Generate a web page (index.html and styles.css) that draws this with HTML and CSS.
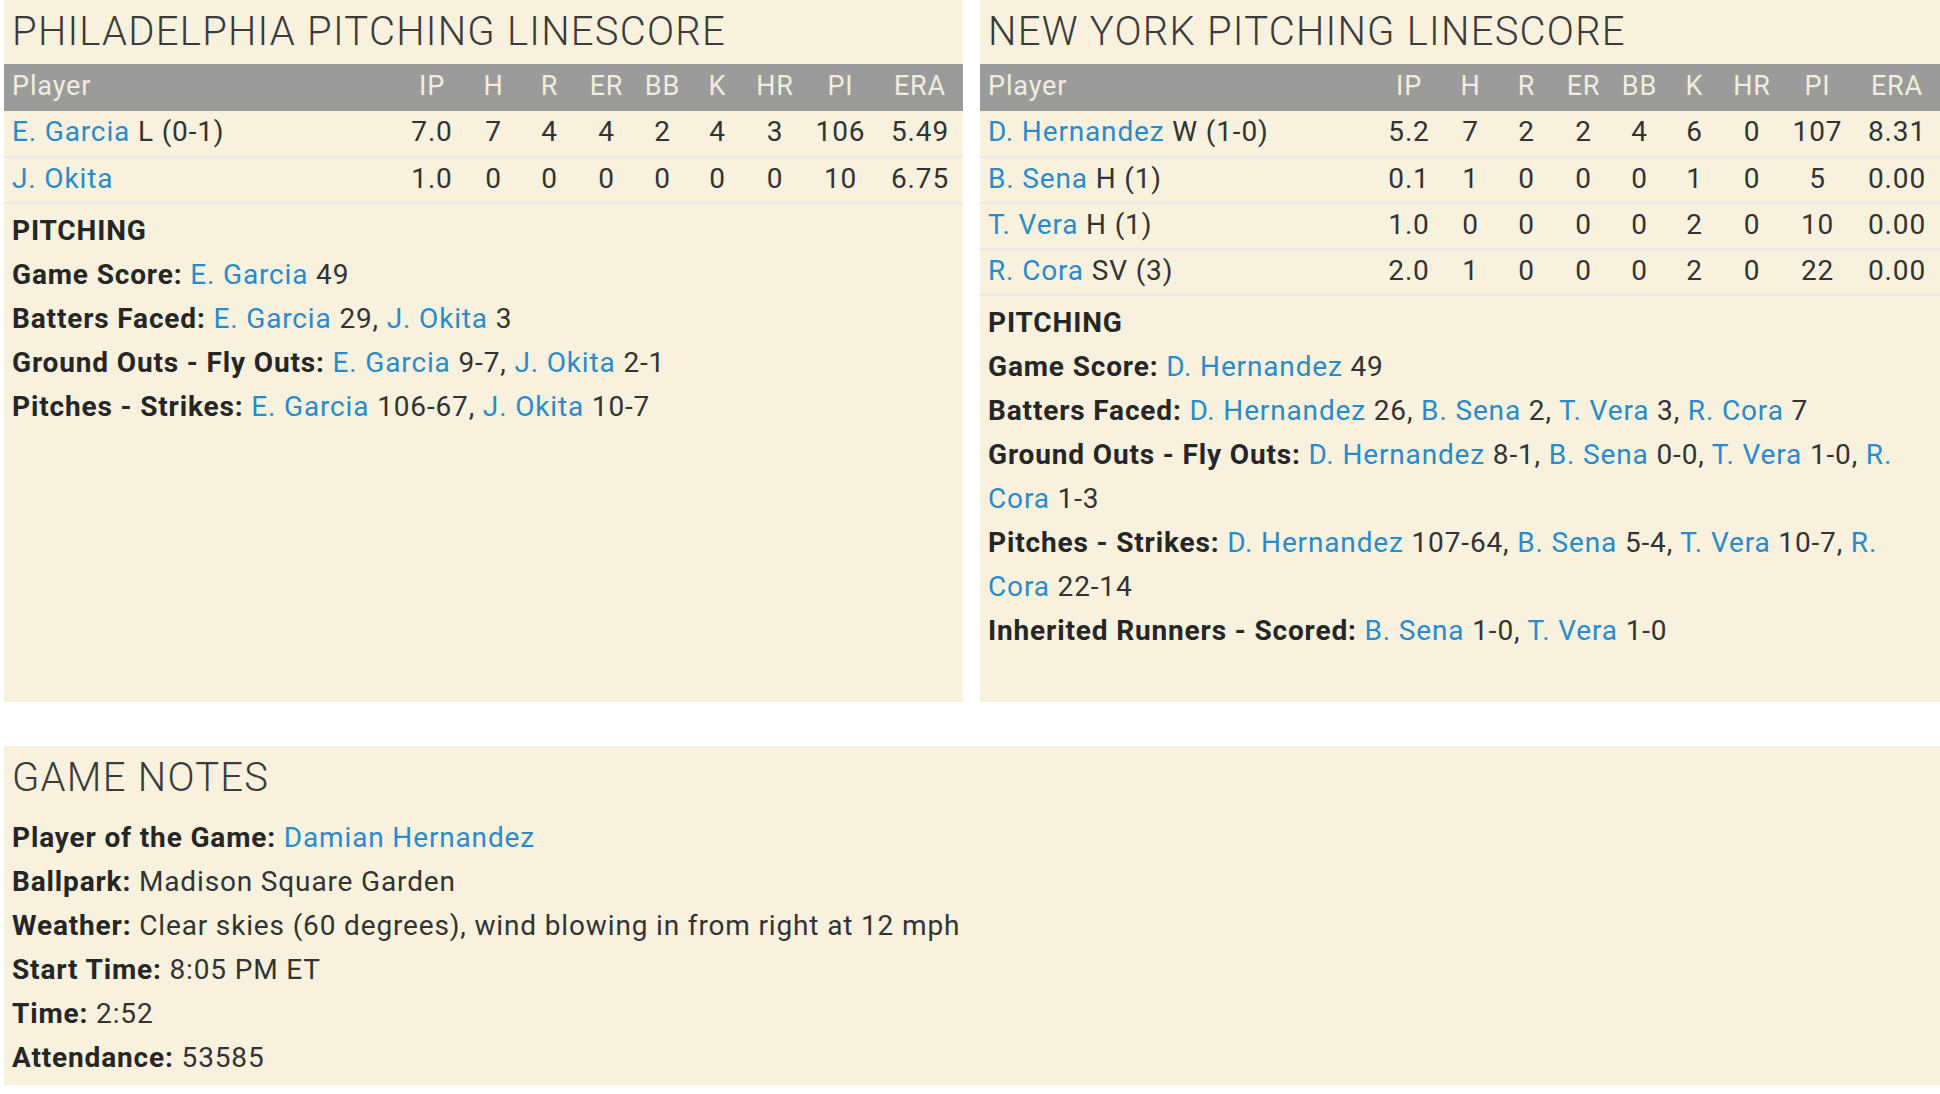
FILE: index.html
```html
<!DOCTYPE html>
<html lang="en">
<head>
<meta charset="utf-8">
<title>Pitching Linescore</title>
<link rel="stylesheet" href="styles.css">
</head>
<body>
<div class="page">
  <div class="top">
    <section class="panel panel-left">
      <h2 class="title">PHILADELPHIA PITCHING LINESCORE</h2>
      <table class="line">
        <colgroup>
          <col class="c-player"><col class="c-ip"><col class="c-h"><col class="c-r"><col class="c-er"><col class="c-bb"><col class="c-k"><col class="c-hr"><col class="c-pi"><col class="c-era">
        </colgroup>
        <thead>
          <tr><th class="pl">Player</th><th>IP</th><th>H</th><th>R</th><th>ER</th><th>BB</th><th>K</th><th>HR</th><th>PI</th><th>ERA</th></tr>
        </thead>
        <tbody>
          <tr><td class="pl"><a href="#">E. Garcia</a> L (0-1)</td><td>7.0</td><td>7</td><td>4</td><td>4</td><td>2</td><td>4</td><td>3</td><td>106</td><td>5.49</td></tr>
          <tr><td class="pl"><a href="#">J. Okita</a></td><td>1.0</td><td>0</td><td>0</td><td>0</td><td>0</td><td>0</td><td>0</td><td>10</td><td>6.75</td></tr>
        </tbody>
      </table>
      <div class="info">
        <div class="sub">PITCHING</div>
        <p><b>Game Score:</b> <a href="#">E. Garcia</a> 49</p>
        <p><b>Batters Faced:</b> <a href="#">E. Garcia</a> 29, <a href="#">J. Okita</a> 3</p>
        <p><b>Ground Outs - Fly Outs:</b> <a href="#">E. Garcia</a> 9-7, <a href="#">J. Okita</a> 2-1</p>
        <p><b>Pitches - Strikes:</b> <a href="#">E. Garcia</a> 106-67, <a href="#">J. Okita</a> 10-7</p>
      </div>
    </section>
    <section class="panel panel-right">
      <h2 class="title">NEW YORK PITCHING LINESCORE</h2>
      <table class="line">
        <colgroup>
          <col class="c-player"><col class="c-ip"><col class="c-h"><col class="c-r"><col class="c-er"><col class="c-bb"><col class="c-k"><col class="c-hr"><col class="c-pi"><col class="c-era">
        </colgroup>
        <thead>
          <tr><th class="pl">Player</th><th>IP</th><th>H</th><th>R</th><th>ER</th><th>BB</th><th>K</th><th>HR</th><th>PI</th><th>ERA</th></tr>
        </thead>
        <tbody>
          <tr><td class="pl"><a href="#">D. Hernandez</a> W (1-0)</td><td>5.2</td><td>7</td><td>2</td><td>2</td><td>4</td><td>6</td><td>0</td><td>107</td><td>8.31</td></tr>
          <tr><td class="pl"><a href="#">B. Sena</a> H (1)</td><td>0.1</td><td>1</td><td>0</td><td>0</td><td>0</td><td>1</td><td>0</td><td>5</td><td>0.00</td></tr>
          <tr><td class="pl"><a href="#">T. Vera</a> H (1)</td><td>1.0</td><td>0</td><td>0</td><td>0</td><td>0</td><td>2</td><td>0</td><td>10</td><td>0.00</td></tr>
          <tr><td class="pl"><a href="#">R. Cora</a> SV (3)</td><td>2.0</td><td>1</td><td>0</td><td>0</td><td>0</td><td>2</td><td>0</td><td>22</td><td>0.00</td></tr>
        </tbody>
      </table>
      <div class="info">
        <div class="sub">PITCHING</div>
        <p><b>Game Score:</b> <a href="#">D. Hernandez</a> 49</p>
        <p><b>Batters Faced:</b> <a href="#">D. Hernandez</a> 26, <a href="#">B. Sena</a> 2, <a href="#">T. Vera</a> 3, <a href="#">R. Cora</a> 7</p>
        <p><b>Ground Outs - Fly Outs:</b> <a href="#">D. Hernandez</a> 8-1, <a href="#">B. Sena</a> 0-0, <a href="#">T. Vera</a> 1-0, <a href="#"><span>R.</span> <span>Cora</span></a> <span>1-3</span></p>
        <p><b>Pitches - Strikes:</b> <a href="#">D. Hernandez</a> 107-64, <a href="#">B. Sena</a> 5-4, <a href="#">T. Vera</a> 10-7, <a href="#"><span>R.</span> <span>Cora</span></a> <span>22-14</span></p>
        <p><b>Inherited Runners - Scored:</b> <a href="#">B. Sena</a> 1-0, <a href="#">T. Vera</a> 1-0</p>
      </div>
    </section>
  </div>
  <section class="panel panel-notes">
    <h2 class="title">GAME NOTES</h2>
    <div class="info notes-info">
      <p><b>Player of the Game:</b> <a href="#">Damian Hernandez</a></p>
      <p><b>Ballpark:</b> Madison Square Garden</p>
      <p><b>Weather:</b> Clear skies (60 degrees), wind blowing in from right at 12 mph</p>
      <p><b>Start Time:</b> 8:05 PM ET</p>
      <p><b>Time:</b> 2:52</p>
      <p><b>Attendance:</b> 53585</p>
    </div>
  </section>
</div>
</body>
</html>
```

FILE: styles.css
```css
* { box-sizing: border-box; }

html, body {
  margin: 0;
  padding: 0;
  background: #ffffff;
}

body {
  font-family: Roboto, "Liberation Sans", Arial, sans-serif;
  font-size: 28px;
  letter-spacing: 0.85px;
  color: #333333;
}

a {
  color: #2a8bcb;
  text-decoration: none;
}

.page {
  padding-left: 4px;
  width: 1940px;
}

.top {
  display: flex;
  gap: 17px;
  height: 702px;
}

.panel {
  background: #f7f1de;
  padding: 0 8px;
}

.panel-left {
  width: 959px;
  flex: 0 0 959px;
}

.panel-right {
  flex: 1 1 auto;
}

.title {
  margin: 0 0 2px;
  padding-top: 1px;
  font-size: 40px;
  font-weight: 300;
  letter-spacing: 1.25px;
  line-height: 61px;
  color: #3b3b3b;
  white-space: nowrap;
}

.line {
  width: calc(100% + 16px);
  margin: 0 -8px;
  border-collapse: collapse;
  table-layout: fixed;
}

.c-player { width: auto; }
.c-ip { width: 67px; }
.c-h { width: 56px; }
.c-r { width: 56px; }
.c-er { width: 58px; }
.c-bb { width: 54px; }
.c-k { width: 56px; }
.c-hr { width: 59px; }
.c-pi { width: 72px; }
.c-era { width: 87px; }

.line th {
  background: #9b9b9b;
  color: #f1eddd;
  font-weight: 400;
  font-size: 27px;
  height: 47px;
  line-height: 45px;
  padding: 0 0 0 1px;
  text-align: center;
  vertical-align: top;
  white-space: nowrap;
}

.line td {
  height: 46px;
  line-height: 42px;
  padding: 0 0 0 1px;
  text-align: center;
  vertical-align: top;
  border-bottom: 2px solid #e9e7ec;
  white-space: nowrap;
}

.line .pl {
  text-align: left;
  padding-left: 8px;
}

.info {
  padding-top: 5px;
}

.info p,
.info .sub {
  margin: 0;
  line-height: 44px;
}

.info b,
.info .sub {
  font-weight: 700;
  color: #262626;
}

.panel-notes {
  margin-top: 44px;
  height: 339px;
  width: 1936px;
}

.notes-info {
  padding-top: 6px;
}
```
